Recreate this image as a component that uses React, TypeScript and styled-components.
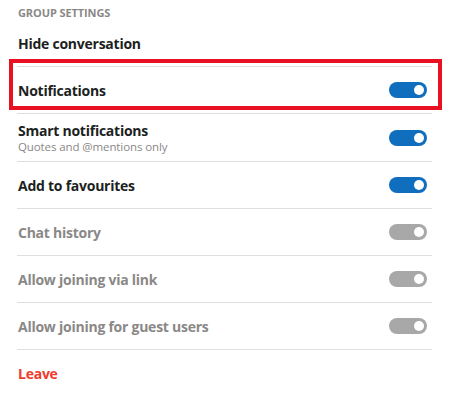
import React from 'react';
import styled, { createGlobalStyle } from 'styled-components';

const GlobalStyle = createGlobalStyle`
  html, body {
    margin: 0;
    background: #ffffff;
    font-family: "Open Sans", "Noto Sans", "Liberation Sans", sans-serif;
  }
`;

const Panel = styled.div`
  width: 415px;
  padding: 5px 0 0 17px;
`;

const SectionTitle = styled.div`
  font-size: 11px;
  font-weight: 700;
  color: #8a8886;
  letter-spacing: -0.1px;
  padding-left: 1px;
  height: 15px;
  line-height: 15px;
`;

const Row = styled.div<{ $highlight?: boolean; $tall?: boolean; $last?: boolean }>`
  position: relative;
  display: flex;
  align-items: center;
  justify-content: space-between;
  height: ${(p) => (p.$tall ? 47 : 46)}px;
  padding-left: 1px;
  border-bottom: ${(p) => (p.$last ? 'none' : '1px solid #e1dfdd')};

  ${(p) =>
    p.$highlight &&
    `
    &::after {
      content: '';
      position: absolute;
      left: -8px;
      right: -10px;
      top: -8px;
      bottom: 3px;
      border: 4px solid #e81123;
      pointer-events: none;
    }
  `}
`;

const Labels = styled.div`
  display: flex;
  flex-direction: column;
`;

const Label = styled.span<{ $disabled?: boolean; $danger?: boolean }>`
  font-size: 14px;
  font-weight: 700;
  letter-spacing: -0.25px;
  color: ${(p) => (p.$danger ? '#f03a2c' : p.$disabled ? '#8a8886' : '#201f1e')};
`;

const SubLabel = styled.span`
  font-size: 11.5px;
  color: #8a8886;
  letter-spacing: -0.1px;
  line-height: 14px;
`;

const Switch = styled.span<{ $disabled?: boolean }>`
  display: inline-flex;
  align-items: center;
  justify-content: flex-end;
  box-sizing: border-box;
  width: 38px;
  height: 16px;
  margin-right: 5px;
  padding-right: 3px;
  border-radius: 8px;
  background: ${(p) => (p.$disabled ? '#a8a8a8' : '#106ebe')};
`;

const Knob = styled.span`
  width: 10px;
  height: 10px;
  border-radius: 50%;
  background: #ffffff;
`;

type Setting = {
  label: string;
  sub?: string;
  disabled?: boolean;
  highlight?: boolean;
};

const settings: Setting[] = [
  { label: 'Notifications', highlight: true },
  { label: 'Smart notifications', sub: 'Quotes and @mentions only' },
  { label: 'Add to favourites' },
  { label: 'Chat history', disabled: true },
  { label: 'Allow joining via link', disabled: true },
  { label: 'Allow joining for guest users', disabled: true },
];

const App: React.FC = () => (
  <>
    <GlobalStyle />
    <Panel>
      <SectionTitle>GROUP SETTINGS</SectionTitle>
      <Row>
        <Label>Hide conversation</Label>
      </Row>
      {settings.map((s) => (
        <Row key={s.label} $highlight={s.highlight} $tall={!!s.sub}>
          <Labels>
            <Label $disabled={s.disabled}>{s.label}</Label>
            {s.sub && <SubLabel>{s.sub}</SubLabel>}
          </Labels>
          <Switch $disabled={s.disabled}>
            <Knob />
          </Switch>
        </Row>
      ))}
      <Row $last>
        <Label $danger>Leave</Label>
      </Row>
    </Panel>
  </>
);

export default App;
